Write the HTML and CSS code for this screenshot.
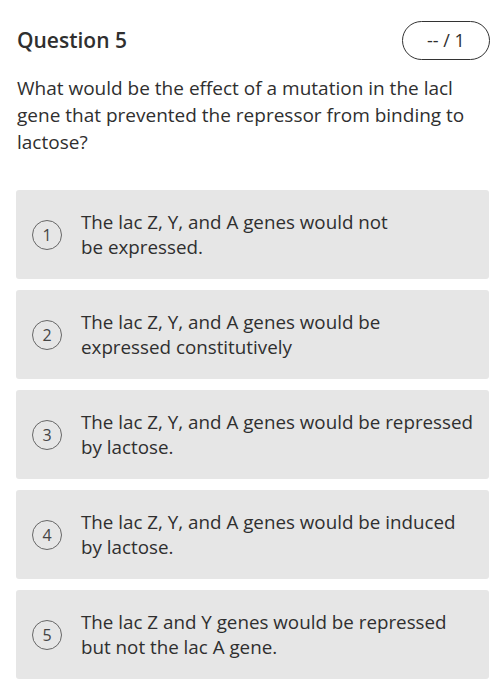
FILE: index.html
```html
<!DOCTYPE html>
<html>
<head>
<meta charset="utf-8">
<link rel="stylesheet" href="styles.css">
</head>
<body>
<div class="page">
  <div class="header">
    <h1 class="title">Question 5</h1>
    <div class="score">-- / 1</div>
  </div>
  <p class="prompt">What would be the effect of a mutation in the lacl gene that prevented the repressor from binding to lactose?</p>
  <div class="options">
    <div class="option"><span class="num">1</span><span class="text">The lac Z, Y, and A genes would not<br>be expressed.</span></div>
    <div class="option"><span class="num">2</span><span class="text">The lac Z, Y, and A genes would be<br>expressed constitutively</span></div>
    <div class="option"><span class="num">3</span><span class="text">The lac Z, Y, and A genes would be repressed by lactose.</span></div>
    <div class="option"><span class="num">4</span><span class="text">The lac Z, Y, and A genes would be induced by lactose.</span></div>
    <div class="option"><span class="num">5</span><span class="text">The lac Z and Y genes would be repressed but not the lac A gene.</span></div>
  </div>
</div>
</body>
</html>
```

FILE: styles.css
```css
html, body {
  margin: 0;
  padding: 0;
  background: #ffffff;
}
body {
  font-family: "Open Sans", "Noto Sans", sans-serif;
  color: #2f2f2f;
}
.page {
  padding: 20px 13px 0 16px;
}
.header {
  display: flex;
  justify-content: space-between;
  align-items: center;
}
.title {
  margin: 0 0 0 1px;
  font-size: 21px;
  font-weight: 600;
  line-height: 40px;
}
.score {
  width: 86px;
  height: 37px;
  border: 1.5px solid #333;
  border-radius: 21px;
  display: flex;
  align-items: center;
  justify-content: center;
  font-size: 18px;
  box-sizing: content-box;
}
.prompt {
  margin: 15px 0 0 1px;
  font-size: 19px;
  line-height: 27px;
  padding-right: 10px;
}
.options {
  margin-top: 34px;
  display: flex;
  flex-direction: column;
  gap: 11px;
}
.option {
  height: 89px;
  box-sizing: border-box;
  background: #e6e6e6;
  border-radius: 3px;
  display: flex;
  align-items: center;
  padding: 0 8px 0 16px;
  margin-right: 1px;
}
.num {
  flex: none;
  border: 1.5px solid #666;
  border-radius: 50%;
  display: flex;
  align-items: center;
  justify-content: center;
  font-size: 16px;
  color: #444;
  margin-right: 19px;
  box-sizing: border-box;
  width: 30px;
  height: 30px;
}
.text {
  font-size: 18.8px;
  line-height: 25px;
}
```
